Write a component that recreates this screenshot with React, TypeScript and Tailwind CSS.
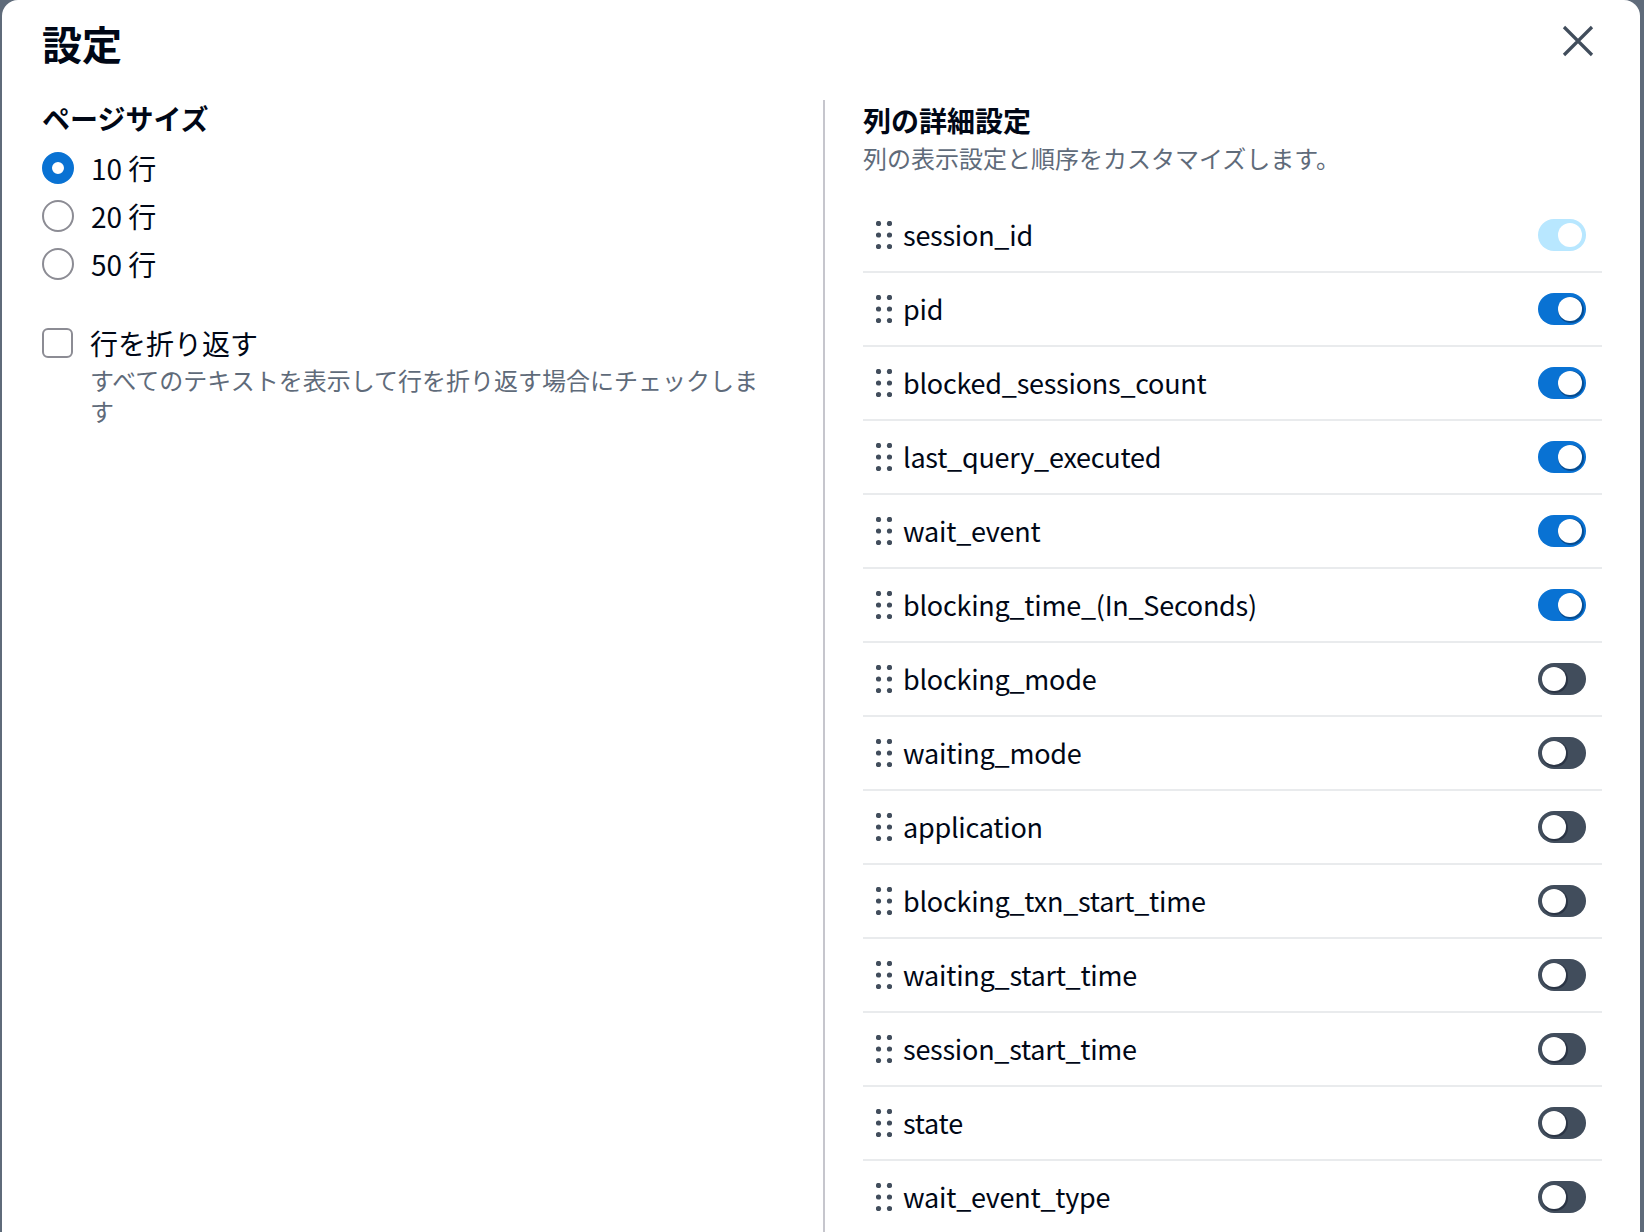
import React from 'react';

type Column = { name: string; visible: boolean; locked?: boolean };

const columns: Column[] = [
    { name: 'session_id', visible: true, locked: true },
    { name: 'pid', visible: true },
    { name: 'blocked_sessions_count', visible: true },
    { name: 'last_query_executed', visible: true },
    { name: 'wait_event', visible: true },
    { name: 'blocking_time_(In_Seconds)', visible: true },
    { name: 'blocking_mode', visible: false },
    { name: 'waiting_mode', visible: false },
    { name: 'application', visible: false },
    { name: 'blocking_txn_start_time', visible: false },
    { name: 'waiting_start_time', visible: false },
    { name: 'session_start_time', visible: false },
    { name: 'state', visible: false },
    { name: 'wait_event_type', visible: false },
];

const pageSizes = [10, 20, 50];

function DragHandle() {
    return (
        <svg width="16" height="28" viewBox="0 0 16 28" className="shrink-0">
            {[2.5, 13.5].map((cx) =>
                [2.5, 14, 25.5].map((cy) => <circle key={`${cx}-${cy}`} cx={cx} cy={cy} r="2.6" fill="#414d5c" />)
            )}
        </svg>
    );
}

function Toggle({ checked, disabled, onChange }: { checked: boolean; disabled?: boolean; onChange: () => void }) {
    let track = 'bg-[#414d5c]';
    if (disabled) track = 'bg-[#b8e7ff]';
    else if (checked) track = 'bg-[#0972d3]';
    return (
        <button
            type="button"
            onClick={disabled ? undefined : onChange}
            className={`relative w-[48px] h-[32px] rounded-full shrink-0 ${track}`}
        >
            <span
                className={`absolute top-[4px] w-[24px] h-[24px] rounded-full bg-white ${checked ? 'left-[20px]' : 'left-[4px]'} ${disabled ? '' : 'shadow-[1px_1px_0_1px_rgba(0,7,22,0.35)]'}`}
            />
        </button>
    );
}

export default function App() {
    const [pageSize, setPageSize] = React.useState(10);
    const [wrap, setWrap] = React.useState(false);
    const [cols, setCols] = React.useState(columns);

    const toggle = (name: string) =>
        setCols((prev) => prev.map((c) => (c.name === name ? { ...c, visible: !c.visible } : c)));

    return (
        <div
            className="w-[1644px] h-[1232px] overflow-hidden bg-[#5f6b7a] pl-[2px] pr-[4px] flex text-[#000716]"
            style={{ fontFamily: '"Noto Sans CJK JP", "Noto Sans", sans-serif' }}
        >
            <div className="flex-1 bg-white rounded-t-[16px] flex flex-col pl-[40px] pr-[38px]">
                {/* header */}
                <div className="h-[100px] flex justify-between shrink-0">
                    <h1 className="pt-[19px] text-[40px] leading-[48px] font-bold">設定</h1>
                    <button type="button" className="mt-[25px] mr-[8px] w-[32px] h-[32px]">
                        <svg width="32" height="32" viewBox="0 0 32 32">
                            <path d="M2 2 L30 30 M30 2 L2 30" stroke="#414d5c" strokeWidth="3.2" fill="none" />
                        </svg>
                    </button>
                </div>

                {/* body */}
                <div className="flex flex-1">
                    <div className="w-[741px] shrink-0 flex flex-col">
                        <h2 className="text-[28px] leading-[36px] font-bold">ページサイズ</h2>
                        <div className="mt-[8px] flex flex-col">
                            {pageSizes.map((size) => (
                                <label key={size} className="h-[48px] flex items-center gap-[17px] cursor-pointer" onClick={() => setPageSize(size)}>
                                    <span
                                        className={`w-[32px] h-[32px] rounded-full bg-white shrink-0 ${pageSize === size ? 'border-[10px] border-[#0972d3]' : 'border-[2px] border-[#8c8c94]'}`}
                                    />
                                    <span className="text-[28px] leading-[36px]">{size} 行</span>
                                </label>
                            ))}
                        </div>
                        <div className="mt-[37px] flex gap-[17px]">
                            <button
                                type="button"
                                onClick={() => setWrap(!wrap)}
                                className={`mt-[3px] w-[31px] h-[30px] rounded-[6px] shrink-0 border-[2px] ${wrap ? 'bg-[#0972d3] border-[#0972d3]' : 'border-[#8c8c94] bg-white'}`}
                            />
                            <div className="flex flex-col">
                                <span className="text-[28px] leading-[36px]">行を折り返す</span>
                                <span className="mt-[3px] w-[680px] text-[24px] leading-[31px] text-[#5f6b7a]">
                                    すべてのテキストを表示して行を折り返す場合にチェックします
                                </span>
                            </div>
                        </div>
                    </div>

                    <div className="ml-[40px] w-[2px] bg-[#c6c6cd] shrink-0" />

                    <div className="flex-1 pl-[38px] flex flex-col">
                        <h2 className="mt-[2px] text-[28px] leading-[36px] font-bold">列の詳細設定</h2>
                        <p className="mt-[4px] text-[24px] leading-[32px] text-[#5f6b7a]">列の表示設定と順序をカスタマイズします。</p>
                        <ul className="mt-[25px] flex flex-col">
                            {cols.map((c) => (
                                <li key={c.name} className="h-[74px] shrink-0 border-b-[2px] border-[#e9ebed] flex items-center pl-[13px] pr-[16px]">
                                    <DragHandle />
                                    <span className="ml-[11px] flex-1 text-[27px] leading-[36px] tracking-[-0.25px]">{c.name}</span>
                                    <Toggle checked={c.visible} disabled={c.locked} onChange={() => toggle(c.name)} />
                                </li>
                            ))}
                        </ul>
                    </div>
                </div>
            </div>
        </div>
    );
}
